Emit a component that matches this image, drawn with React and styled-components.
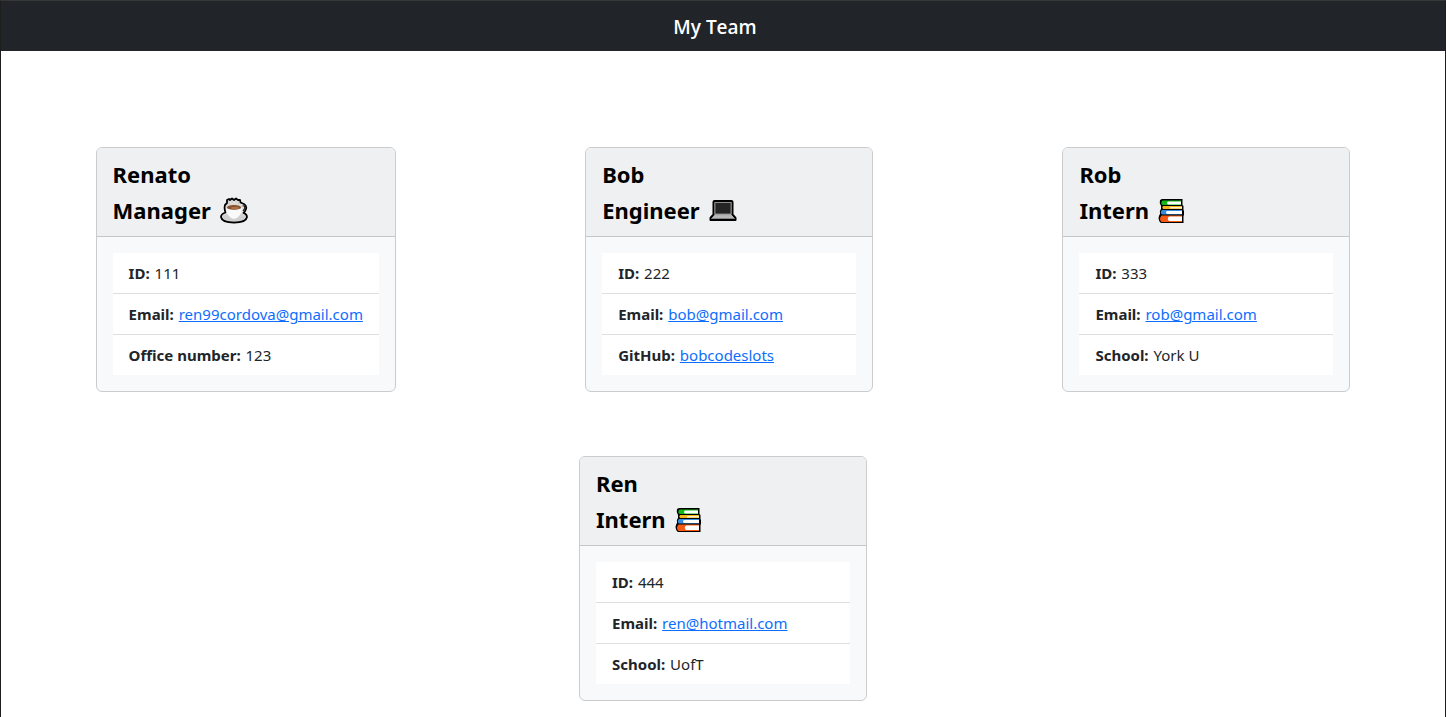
import React from 'react';
import styled, { createGlobalStyle } from 'styled-components';

const GlobalStyle = createGlobalStyle`
  *, *::before, *::after { box-sizing: border-box; }
  body {
    margin: 0;
    background: #fff;
    color: #212529;
    font-family: "Noto Sans", "Open Sans", sans-serif;
    font-size: 15px;
    line-height: 24px;
  }
`;

const Page = styled.div`
  min-height: 100vh;
  border: solid #1e1e1e;
  border-top-color: #373737;
  border-width: 1px 1px 0;
`;

const Navbar = styled.header`
  display: flex;
  justify-content: center;
  padding: 11px 16px 9px 0;
  background: #212529;
`;

const Brand = styled.h1`
  margin: 0;
  color: #fff;
  font-family: "Open Sans", "Noto Sans", sans-serif;
  font-size: 19px;
  font-weight: 600;
  line-height: 30px;
`;

const Team = styled.main`
  display: flex;
  flex-wrap: wrap;
  justify-content: space-around;
  row-gap: 64px;
  padding-top: 96px;
`;

const Card = styled.article`
  min-width: 288px;
  margin: 0 48px;
  border: 1px solid #cbccce;
  border-radius: 6px;
  background: #f8f9fb;
  overflow: hidden;
`;

const CardHeader = styled.div`
  padding: 8px 16px;
  border-bottom: 1px solid #c5c6c8;
  background: #eff0f2;
  color: #000;
`;

const Heading = styled.h2`
  display: flex;
  align-items: center;
  gap: 9px;
  margin: 0;
  font-size: 22px;
  font-weight: 700;
  line-height: 36px;
`;

const RoleIcon = styled.svg`
  width: 28px;
  height: 28px;
`;

const Details = styled.ul`
  margin: 16px;
  padding: 0;
  list-style: none;
  background: #fff;
`;

const Detail = styled.li`
  padding: 8px 16px;
  border-bottom: 1px solid #dfdfdf;
  font-weight: 400;
  &:last-child { border-bottom: 0; }
`;

const Label = styled.strong`
  margin-right: 1px;
  font-weight: 700;
`;

const Link = styled.a`
  color: #0d6efd;
  text-decoration: underline;
`;

const Coffee = () => (
  <RoleIcon viewBox="0 0 28 28" aria-hidden="true">
    <path d="M5 9L7 7L7 4L9 3L10 4L12 2.500L14 4L16 2.500L18 4L20 4L20.500 6.500L24 8Q27 10 26 13Q25 16 23.500 17Q27 18 27 21Q26 26.500 14 26.500Q2 26.500 1 21Q1 18 5.500 16.500Q4 13 5 9Z" fill="#e4e4e4" stroke="#000" strokeWidth="1.8" strokeLinejoin="round" />
    <ellipse cx="14" cy="21" rx="11.500" ry="4.300" fill="#d0d0d0" />
    <path d="M6 11Q6 21 14 23Q22 21 22 11Z" fill="#fafafa" />
    <path d="M22.500 10Q25.500 9 24.500 13L23 15" fill="none" stroke="#222" strokeWidth="1.3" />
    <ellipse cx="14" cy="10.700" rx="8.300" ry="3.300" fill="#ddd3cc" />
    <ellipse cx="14" cy="11.400" rx="7" ry="2.300" fill="#85502f" />
    <ellipse cx="15" cy="12" rx="4" ry="1.200" fill="#ad7045" />
    <path d="M9 8V5M12 7V4M16 7V4M18.500 8V5" stroke="#c9c9c9" strokeWidth="1.3" />
  </RoleIcon>
);

const Laptop = () => (
  <RoleIcon viewBox="0 0 28 28" aria-hidden="true">
    <path d="M4.500 6Q4.500 5 5.500 5H22.500Q23.500 5 23.500 6V18.500L26.500 22V24H1.500V22L4.500 18.500Z" fill="#aaa" stroke="#000" strokeWidth="2" strokeLinejoin="round" />
    <path d="M6 6.500H22V18H6Z" fill="#252525" stroke="#999" strokeWidth="0.8" />
    <path d="M5 19.500H23L25 22H3Z" fill="#b9b9b9" />
    <path d="M2.500 22.500H25.500" stroke="#858585" strokeWidth="1" />
  </RoleIcon>
);

const Books = () => (
  <RoleIcon viewBox="0 0 28 28" aria-hidden="true">
    <path d="M4 3H24.500V9L25.500 10V14L26 15V19L25.500 20V27H3Q1 26 0.500 22Q1 19 2 18Q1 15 3 13L3 10Q1 7 2 4Z" fill="#000" />
    <path d="M4.500 4.500H23V9H4.500Q2 7 4.500 4.500Z" fill="#16b718" />
    <path d="M10 5.500H23V8.500H10Q8 7 10 5.500Z" fill="#fff" />
    <path d="M5 10H24V13H5Q3.500 11.500 5 10Z" fill="#f3b51d" />
    <path d="M12 11H24V12.500H12Z" fill="#fff1c9" />
    <path d="M4 14H24V18.500H4Q1.500 16.500 4 14Z" fill="#368ce0" />
    <path d="M9 15H24V18H9Q7 16.500 9 15Z" fill="#fff" />
    <path d="M3.500 19.500H24V26H3.500Q0.500 23 3.500 19.500Z" fill="#f45a13" />
    <path d="M11 20.500H24V25H11Q8.500 23 11 20.500Z" fill="#fff" />
  </RoleIcon>
);

const icons = { Manager: Coffee, Engineer: Laptop, Intern: Books };

const team = [
  { name: 'Renato', role: 'Manager', id: '111', email: 'ren99cordova@gmail.com', label: 'Office number', value: '123' },
  { name: 'Bob', role: 'Engineer', id: '222', email: 'bob@gmail.com', label: 'GitHub', value: 'bobcodeslots', href: 'https://github.com/bobcodeslots' },
  { name: 'Rob', role: 'Intern', id: '333', email: 'rob@gmail.com', label: 'School', value: 'York U' },
  { name: 'Ren', role: 'Intern', id: '444', email: 'ren@hotmail.com', label: 'School', value: 'UofT' },
];

function Member({ name, role, id, email, label, value, href }) {
  const Icon = icons[role];
  return (
    <Card>
      <CardHeader>
        <Heading>{name}</Heading>
        <Heading as="h3">{role}<Icon /></Heading>
      </CardHeader>
      <Details>
        <Detail><Label>ID:</Label> {id}</Detail>
        <Detail><Label>Email:</Label> <Link href={`mailto:${email}`}>{email}</Link></Detail>
        <Detail><Label>{label}:</Label> {href ? <Link href={href}>{value}</Link> : value}</Detail>
      </Details>
    </Card>
  );
}

export default function App() {
  return (
    <>
      <GlobalStyle />
      <Page>
        <Navbar><Brand>My Team</Brand></Navbar>
        <Team>{team.map((member) => <Member key={member.id} {...member} />)}</Team>
      </Page>
    </>
  );
}
